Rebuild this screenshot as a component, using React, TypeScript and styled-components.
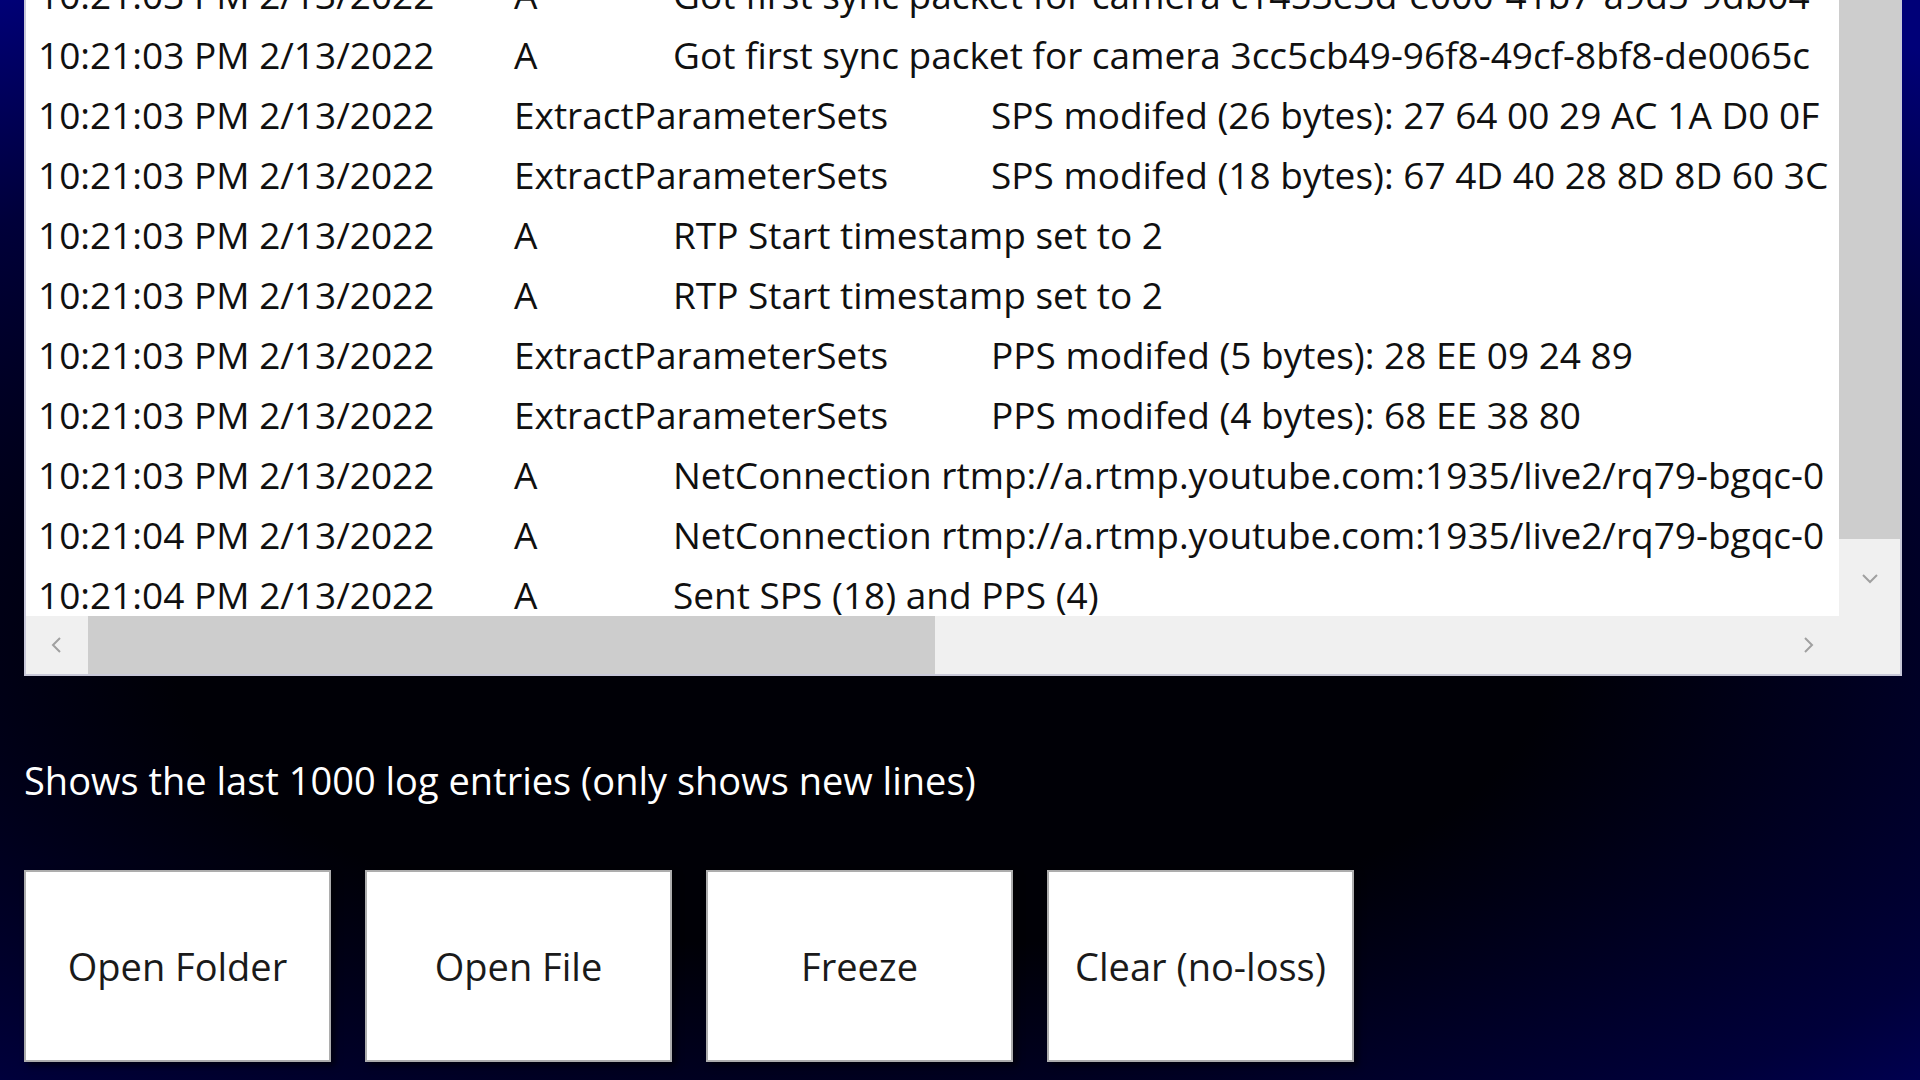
import React from 'react'
import styled, { createGlobalStyle } from 'styled-components'

const Global = createGlobalStyle`
  html, body { margin: 0; padding: 0; }
  body {
    width: 1920px;
    height: 1080px;
    overflow: hidden;
    font-family: "Open Sans", "Noto Sans", sans-serif;
  }
`

const Page = styled.div`
  width: 1920px;
  height: 1080px;
  background: radial-gradient(ellipse 90% 70% at 45% 60%, #000006 40%, #00003a 75%, #000078 100%);
  position: relative;
  overflow: hidden;
`

const ListFrame = styled.div`
  position: relative;
  margin: -38px 0 0 24px;
  width: 1874px;
  height: 710px;
  background: #ffffff;
  border: 2px solid #c8c8d8;
  display: grid;
  grid-template-columns: 1fr 61px;
  grid-template-rows: 1fr 58px;
`

const Rows = styled.div`
  overflow: hidden;
  padding: 0 0 0 12px;
  display: flex;
  flex-direction: column;
`

const Row = styled.div`
  display: flex;
  align-items: center;
  height: 60px;
  flex: none;
  font-size: 37px;
  color: #101010;
  white-space: nowrap;
`

const Time = styled.span`
  width: 476px;
  flex: none;
`

const Source = styled.span<{ $wide?: boolean }>`
  width: ${p => (p.$wide ? 477 : 159)}px;
  flex: none;
`

const VScroll = styled.div`
  background: #f0f0f0;
  display: flex;
  flex-direction: column;
`

const VThumb = styled.div`
  background: #cdcdcd;
  height: 575px;
`

const Arrow = styled.div<{ $fixed?: boolean }>`
  flex: ${p => (p.$fixed ? 'none' : 1)};
  width: ${p => (p.$fixed ? '62px' : 'auto')};
  display: flex;
  align-items: center;
  justify-content: center;
`

const HScroll = styled.div`
  background: #f0f0f0;
  display: flex;
  align-items: center;
`

const HThumb = styled.div`
  background: #cdcdcd;
  width: 847px;
  height: 100%;
`

const Spacer = styled.div`
  flex: 1;
`

const Corner = styled.div`
  background: #f0f0f0;
`

const Caption = styled.div`
  color: #ffffff;
  font-size: 38px;
  margin: 78px 0 0 24px;
`

const Buttons = styled.div`
  display: flex;
  gap: 34px;
  margin: 64px 0 0 24px;
`

const Button = styled.button`
  width: 307px;
  height: 192px;
  background: #ffffff;
  border: 2px solid #adadad;
  box-shadow: 4px 4px 6px rgba(0, 0, 0, 0.6);
  font-family: "Open Sans", "Noto Sans", sans-serif;
  font-size: 38px;
  color: #1a1a1a;
  padding: 0;
`

const Chev = ({ d }: { d: string }) => (
  <svg width="22" height="22" viewBox="0 0 22 22">
    <path d={d} fill="none" stroke="#a0a0a0" strokeWidth="2" />
  </svg>
)

type Entry = { t: string; s: string; m: string; wide?: boolean }

const entries: Entry[] = [
  { t: '10:21:03 PM 2/13/2022', s: 'A', m: 'Got first sync packet for camera c1453e3d-e000-41b7-a9d5-9db04' },
  { t: '10:21:03 PM 2/13/2022', s: 'A', m: 'Got first sync packet for camera 3cc5cb49-96f8-49cf-8bf8-de0065c' },
  { t: '10:21:03 PM 2/13/2022', s: 'ExtractParameterSets', wide: true, m: 'SPS modifed (26 bytes): 27 64 00 29 AC 1A D0 0F' },
  { t: '10:21:03 PM 2/13/2022', s: 'ExtractParameterSets', wide: true, m: 'SPS modifed (18 bytes): 67 4D 40 28 8D 8D 60 3C' },
  { t: '10:21:03 PM 2/13/2022', s: 'A', m: 'RTP Start timestamp set to 2' },
  { t: '10:21:03 PM 2/13/2022', s: 'A', m: 'RTP Start timestamp set to 2' },
  { t: '10:21:03 PM 2/13/2022', s: 'ExtractParameterSets', wide: true, m: 'PPS modifed (5 bytes): 28 EE 09 24 89' },
  { t: '10:21:03 PM 2/13/2022', s: 'ExtractParameterSets', wide: true, m: 'PPS modifed (4 bytes): 68 EE 38 80' },
  { t: '10:21:03 PM 2/13/2022', s: 'A', m: 'NetConnection rtmp://a.rtmp.youtube.com:1935/live2/rq79-bgqc-0' },
  { t: '10:21:04 PM 2/13/2022', s: 'A', m: 'NetConnection rtmp://a.rtmp.youtube.com:1935/live2/rq79-bgqc-0' },
  { t: '10:21:04 PM 2/13/2022', s: 'A', m: 'Sent SPS (18) and PPS (4)' },
]

const App = () => {
  return (
    <Page>
      <Global />
      <ListFrame>
        <Rows>
          {entries.map((e, i) => (
            <Row key={i}>
              <Time>{e.t}</Time>
              <Source $wide={e.wide}>{e.s}</Source>
              <span>{e.m}</span>
            </Row>
          ))}
        </Rows>
        <VScroll>
          <VThumb />
          <Arrow><Chev d="M4 8 L11 15 L18 8" /></Arrow>
        </VScroll>
        <HScroll>
          <Arrow $fixed><Chev d="M14 4 L7 11 L14 18" /></Arrow>
          <HThumb />
          <Spacer />
          <Arrow $fixed><Chev d="M8 4 L15 11 L8 18" /></Arrow>
        </HScroll>
        <Corner />
      </ListFrame>
      <Caption>Shows the last 1000 log entries (only shows new lines)</Caption>
      <Buttons>
        <Button>Open Folder</Button>
        <Button>Open File</Button>
        <Button>Freeze</Button>
        <Button>Clear (no-loss)</Button>
      </Buttons>
    </Page>
  )
}

export default App
